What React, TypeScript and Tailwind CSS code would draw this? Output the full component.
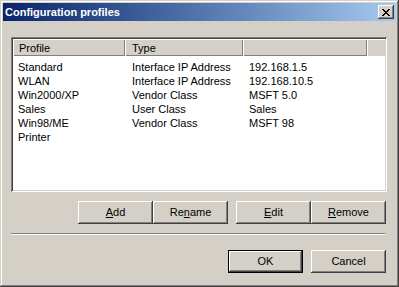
import React from "react";

const font = { fontFamily: '"Liberation Sans", Arial, sans-serif' };

function Btn({ children, isDefault = false }: { children: React.ReactNode; isDefault?: boolean }) {
  if (isDefault) {
    return (
      <div className="w-[75px] h-[23px] border border-black bg-[#D4D0C8]">
        <div className="w-full h-full flex items-center justify-center text-[11px] text-black shadow-[inset_-1px_-1px_#404040,inset_1px_1px_#fff,inset_-2px_-2px_#808080]">
          {children}
        </div>
      </div>
    );
  }
  return (
    <div className="w-[75px] h-[23px] bg-[#D4D0C8] flex items-center justify-center text-[11px] text-black shadow-[inset_-1px_-1px_#404040,inset_1px_1px_#fff,inset_-2px_-2px_#808080]">
      {children}
    </div>
  );
}

const rows = [
  ["Standard", "Interface IP Address", "192.168.1.5"],
  ["WLAN", "Interface IP Address", "192.168.10.5"],
  ["Win2000/XP", "Vendor Class", "MSFT 5.0"],
  ["Sales", "User Class", "Sales"],
  ["Win98/ME", "Vendor Class", "MSFT 98"],
  ["Printer", "", ""],
];

export default function App() {
  return (
    <div
      style={font}
      className="w-[399px] h-[287px] bg-[#D4D0C8] p-[3px] flex flex-col shadow-[inset_-1px_-1px_#404040,inset_1px_1px_#D4D0C8,inset_-2px_-2px_#808080,inset_2px_2px_#fff]"
    >
      {/* title bar */}
      <div className="h-[18px] bg-linear-to-r from-[#0A246A] to-[#A6CAF0] flex items-center justify-between">
        <span className="pl-[2px] text-white font-bold text-[11px] leading-none">Configuration profiles</span>
        <div className="mr-[2px] w-[16px] h-[14px] bg-[#D4D0C8] flex items-center justify-center shadow-[inset_-1px_-1px_#404040,inset_1px_1px_#fff,inset_-2px_-2px_#808080]">
          <svg width="8" height="7" viewBox="0 0 8 7" shapeRendering="crispEdges">
            <path d="M0 0h2v1h-2zM6 0h2v1h-2zM1 1h2v1h-2zM5 1h2v1h-2zM2 2h4v1h-4zM3 3h2v1h-2zM2 4h4v1h-4zM1 5h2v1h-2zM5 5h2v1h-2zM0 6h2v1h-2zM6 6h2v1h-2z" fill="#000" />
          </svg>
        </div>
      </div>

      {/* list box */}
      <div className="mt-[16px] ml-[8px] w-[376px] h-[155px] bg-white p-[2px] shadow-[inset_1px_1px_#808080,inset_-1px_-1px_#fff,inset_2px_2px_#404040,inset_-2px_-2px_#D4D0C8]">
        <div className="flex h-[17px] text-[11px] text-black">
          <div className="w-[112px] pl-[6px] pt-[1px] flex items-center bg-[#D4D0C8] shadow-[inset_1px_1px_#fff,inset_-1px_-1px_#808080]">Profile</div>
          <div className="w-[118px] pl-[7px] pt-[1px] flex items-center bg-[#D4D0C8] shadow-[inset_1px_1px_#fff,inset_-1px_-1px_#808080]">Type</div>
          <div className="w-[124px] bg-[#D4D0C8] shadow-[inset_1px_1px_#fff,inset_-1px_-1px_#808080]"></div>
          <div className="w-[18px] bg-[#D4D0C8] shadow-[inset_1px_1px_#fff]"></div>
        </div>
        <div className="pt-[4px] flex flex-col">
          {rows.map((r) => (
            <div key={r[0]} className="flex h-[14px] items-center text-[11px] text-black leading-none">
              <div className="w-[112px] pl-[5px]">{r[0]}</div>
              <div className="w-[118px] pl-[7px]">{r[1]}</div>
              <div className="w-[124px] pl-[6px]">{r[2]}</div>
            </div>
          ))}
        </div>
      </div>

      {/* action buttons */}
      <div className="mt-[9px] flex ml-[75px]">
        <Btn>
          <span><u className="underline-offset-1">A</u>dd</span>
        </Btn>
        <Btn>
          <span>Re<u className="underline-offset-1">n</u>ame</span>
        </Btn>
        <div className="w-[8px]" />
        <Btn>
          <span><u className="underline-offset-1">E</u>dit</span>
        </Btn>
        <Btn>
          <span><u className="underline-offset-1">R</u>emove</span>
        </Btn>
      </div>

      {/* separator */}
      <div className="mt-[9px] ml-[8px] w-[374px] h-[2px] border-t border-t-[#808080] border-b border-b-white" />

      {/* OK / Cancel */}
      <div className="mt-[15px] flex ml-[225px]">
        <Btn isDefault>OK</Btn>
        <div className="w-[8px]" />
        <Btn>Cancel</Btn>
      </div>
    </div>
  );
}
